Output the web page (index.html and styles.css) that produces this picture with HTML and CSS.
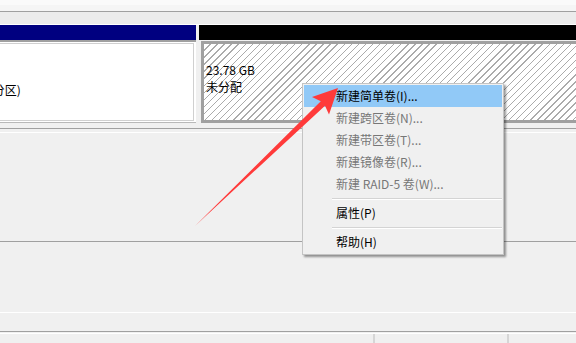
FILE: index.html
```html
<!DOCTYPE html>
<html lang="zh-CN">
<head>
    <meta charset="UTF-8">
    <title>磁盘管理</title>
    <link rel="stylesheet" href="styles.css">
</head>
<body>
    <div class="screen">
        <div class="strip-a"></div>
        <div class="strip-b"></div>

        <div class="disk">
            <div class="part part-primary">
                <div class="part-head"></div>
                <div class="part-body">
                    <div class="part-inner">
                        <div class="part-text">
                            <div>&nbsp;</div>
                            <div>&nbsp;</div>
                            <div class="part-status">状态良好 (主分区)</div>
                        </div>
                    </div>
                </div>
            </div>
            <div class="part part-free">
                <div class="part-head"></div>
                <div class="part-body">
                    <div class="part-text">
                        <div>&nbsp;</div>
                        <div>23.78 GB</div>
                        <div>未分配</div>
                    </div>
                </div>
            </div>
        </div>

        <div class="disk-sep"></div>
        <div class="pane pane-a"></div>
        <div class="pane pane-b"></div>
        <div class="pane pane-c"></div>

        <div class="status">
            <div class="status-cell cell-main"></div>
            <div class="status-cell cell-mid"></div>
            <div class="status-cell cell-end"></div>
        </div>

        <!-- context menu over the unallocated space -->
        <div class="menu">
            <div class="menu-item active">新建简单卷(I)...</div>
            <div class="menu-item disabled">新建跨区卷(N)...</div>
            <div class="menu-item disabled">新建带区卷(T)...</div>
            <div class="menu-item disabled">新建镜像卷(R)...</div>
            <div class="menu-item disabled">新建 RAID-5 卷(W)...</div>
            <div class="menu-sep"></div>
            <div class="menu-item">属性(P)</div>
            <div class="menu-sep"></div>
            <div class="menu-item">帮助(H)</div>
        </div>

        <svg class="arrow" width="576" height="343" viewBox="0 0 576 343">
            <polygon points="195,226 325,105.7 329,114.5 338,88 312,97 320.8,101.3" fill="#ff3a3a"/>
        </svg>
    </div>
</body>
</html>
```

FILE: styles.css
```css
* {
    box-sizing: border-box;
}
body {
    margin: 0;
    background-color: #f0f0f0;
    font-family: "Noto Sans CJK SC", "Liberation Sans", sans-serif;
    font-size: 12px;
    color: #000;
    overflow: hidden;
}
.screen {
    position: relative;
    width: 576px;
    height: 343px;
    overflow: hidden;
}
.strip-a {
    height: 12px;
    background-color: #f5f5f5;
    border-top: 5px solid #fafafa;
    border-bottom: 1px solid #a0a0a0;
}
.strip-b {
    height: 13px;
    background-color: #ececec;
    border-bottom: 1px solid #fff;
}
.disk {
    display: flex;
    gap: 3px;
    height: 98px;
    margin-left: -79px;
}
.part {
    display: flex;
    flex-direction: column;
}
.part-head {
    height: 15px;
}
.part-body {
    height: 83px;
}
.part-text {
    line-height: 17px;
    padding-top: 3px;
    white-space: nowrap;
}
.part-primary {
    width: 275px;
}
.part-primary .part-head {
    background-color: #000080;
}
.part-primary .part-body {
    background-color: #fff;
    border-top: 2px solid #a0a0a0;
    border-bottom: 1px solid #b8b8b8;
    padding: 1px 2px 1px 0;
}
.part-inner {
    height: 100%;
    border: 1px solid #d0d0d0;
    padding-left: 4px;
}
.part-free {
    flex: 1;
}
.part-free .part-head {
    background-color: #000;
}
.part-free .part-body {
    margin: 1px 0 0 2px;
    height: 82px;
    border: 3px solid #a0a0a0;
    border-right: none;
    padding-left: 2px;
    background-color: #fff;
    background-image: repeating-linear-gradient(135deg, transparent 0 4px, #ababab 4px 5px);
}
.part-free .part-text {
    padding-top: 0;
}
.disk-sep {
    margin-top: 5px;
    height: 5px;
    border-top: 1px solid #a0a0a0;
    border-bottom: 1px solid #fff;
}
.pane-a {
    height: 109px;
    border-bottom: 1px solid #a0a0a0;
}
.pane-b {
    height: 71px;
    border-bottom: 1px solid #fff;
}
.pane-c {
    height: 19px;
    border-bottom: 1px solid #a0a0a0;
}
.status {
    display: flex;
    margin-top: 1px;
    height: 12px;
    border-top: 1px solid #fff;
}
.status-cell {
    height: 100%;
    border-right: 2px solid #d6d6d6;
}
.cell-main {
    width: 375px;
}
.cell-mid {
    width: 134px;
}
.cell-end {
    flex: 1;
    border-right: none;
}
.menu {
    position: absolute;
    left: 302px;
    top: 83px;
    width: 202px;
    padding: 1px;
    background-color: #f0f0f0;
    border: 1px solid #c4c4c4;
    box-shadow: 2px 2px 2px rgba(0,0,0,0.4);
}
.menu-item {
    height: 22px;
    line-height: 22px;
    padding-left: 32px;
    white-space: nowrap;
}
.menu-item.active {
    background-color: #91c9f7;
}
.menu-item.disabled {
    color: #777;
}
.menu-sep {
    height: 7px;
    margin-left: 28px;
    padding-top: 3px;
}
.menu-sep::after {
    content: "";
    display: block;
    height: 1px;
    background-color: #d4d4d4;
    border-bottom: 1px solid #fff;
}
.arrow {
    position: absolute;
    left: 0;
    top: 0;
    pointer-events: none;
}
```
